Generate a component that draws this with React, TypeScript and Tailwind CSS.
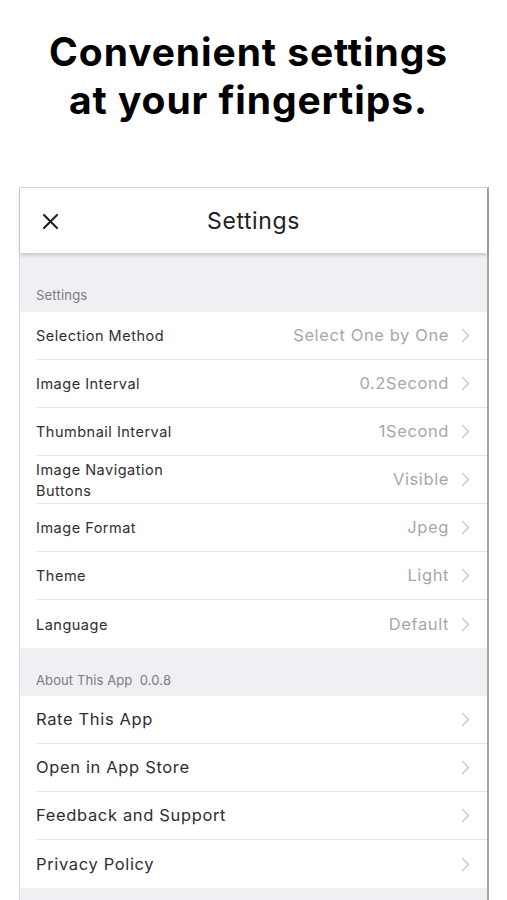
const settingsRows = [
  { label: "Selection Method", value: "Select One by One" },
  { label: "Image Interval", value: "0.2Second" },
  { label: "Thumbnail Interval", value: "1Second" },
  { label: "Image Navigation\nButtons", value: "Visible" },
  { label: "Image Format", value: "Jpeg" },
  { label: "Theme", value: "Light" },
  { label: "Language", value: "Default" },
];

const aboutRows = ["Rate This App", "Open in App Store", "Feedback and Support", "Privacy Policy"];

function Chevron() {
  return (
    <svg width="9" height="15" viewBox="0 0 9 15" fill="none" className="shrink-0">
      <path d="M1.5 1.5 L7.5 7.5 L1.5 13.5" stroke="#c4c4c8" strokeWidth="1.4" strokeLinecap="round" strokeLinejoin="round" />
    </svg>
  );
}

function Row({ label, value, big, last }: { label: string; value?: string; big?: boolean; last?: boolean }) {
  return (
    <div className="h-12 bg-white pl-4 flex">
      <div className={`flex-1 flex items-center pr-[17px] ${last ? "" : "border-b border-[#e6e6e9]"}`}>
        <div
          className={`flex-1 whitespace-pre-line text-[#2e2e30] ${
            big ? "text-[16.5px] tracking-[0.65px]" : "text-[14.5px] leading-[21px] tracking-[0.5px]"
          }`}
        >
          {label}
        </div>
        {value && <div className="text-[16.5px] text-[#a7a7ab] tracking-[0.6px] mr-[12px]">{value}</div>}
        <Chevron />
      </div>
    </div>
  );
}

export default function App() {
  return (
    <div className="w-[507px] h-[900px] overflow-hidden bg-white" style={{ fontFamily: "Inter, 'Noto Sans', sans-serif" }}>
      <h1 className="pt-[28px] pr-[10px] text-center text-[39px] leading-[48px] font-bold text-black tracking-[0.9px]">
        Convenient settings
        <br />
        at your fingertips.
      </h1>

      <div className="mt-[63px] ml-[19px] w-[470px] border-l border-t border-[#d6d6d8] border-r-2 border-r-[#a6a6a8] bg-[#efeff4]">
        <div className="relative h-[65px] bg-white flex items-center justify-center shadow-[0_2px_4px_rgba(0,0,0,0.18)]">
          <svg className="absolute left-[23px] top-[26px]" width="15" height="15" viewBox="0 0 15 15">
            <path d="M1 1 L14 14 M14 1 L1 14" stroke="#1c1c1c" strokeWidth="2" strokeLinecap="round" />
          </svg>
          <span className="text-[23px] text-[#222] tracking-[0.6px] pt-[2px]">Settings</span>
        </div>

        <div className="h-[59px] flex items-end pl-4 pb-[7px] text-[13px] text-[#7b7b80] tracking-[0.2px]">Settings</div>
        {settingsRows.map((r, i) => (
          <Row key={r.label} label={r.label} value={r.value} last={i === settingsRows.length - 1} />
        ))}

        <div className="h-12 flex items-end pl-4 pb-[6px] text-[13px] text-[#7b7b80] tracking-[0.1px]">
          About This App&nbsp;&nbsp;0.0.8
        </div>
        {aboutRows.map((r, i) => (
          <Row key={r} label={r} big last={i === aboutRows.length - 1} />
        ))}
        <div className="h-12" />
      </div>
    </div>
  );
}
